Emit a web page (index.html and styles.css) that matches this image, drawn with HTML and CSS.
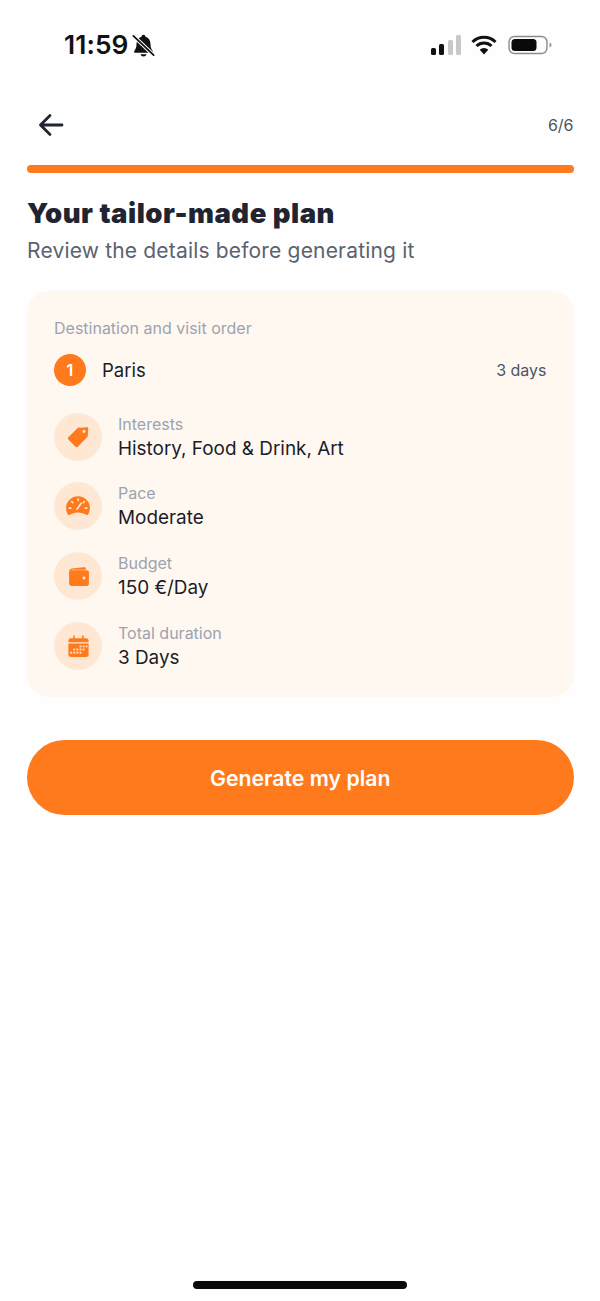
FILE: index.html
```html
<!DOCTYPE html>
<html lang="en">
<head>
<meta charset="utf-8">
<title>Your tailor-made plan</title>
<link rel="stylesheet" href="styles.css">
</head>
<body>
<div class="screen">
  <header class="status">
    <div class="status-left">
      <span class="time">11:59</span>
      <svg class="bell" viewBox="0 0 24 24" width="27" height="27"><path d="M12 2.500c-1 0-1.700.7-1.800 1.700C7.500 5 5.800 7.400 5.800 10.500c0 3.500-.8 4.800-2 6.300-.5.700 0 1.700.9 1.700h14.600c.9 0 1.400-1 .9-1.700-1.200-1.500-2-2.800-2-6.300 0-3.100-1.700-5.500-4.400-6.300-.1-1-.8-1.700-1.800-1.700zM9.300 19.800a2.800 2.800 0 0 0 5.400 0z" fill="#111"/><path d="M3 3.500l18 17" stroke="#fff" stroke-width="3.400"/><path d="M3 3.500l18 17" stroke="#111" stroke-width="1.600" stroke-linecap="round"/></svg>
    </div>
    <div class="status-right">
      <svg class="signal" viewBox="0 0 30 20" width="30" height="20"><rect x="0" y="13" width="5" height="7" rx="1.500" fill="#111"/><rect x="8" y="9" width="5" height="11" rx="1.500" fill="#111"/><rect x="17" y="5" width="5" height="15" rx="1.500" fill="#c8c8c8"/><rect x="25" y="0" width="5" height="20" rx="1.500" fill="#c8c8c8"/></svg>
      <svg class="wifi" viewBox="0 0 26 20" width="26" height="20"><path d="M1.500 7a16.500 16.500 0 0 1 23 0M5.500 11a10.800 10.800 0 0 1 15 0" fill="none" stroke="#111" stroke-width="3" stroke-linecap="butt"/><path d="M13 19.500l-4.300-4.700a6 6 0 0 1 8.600 0z" fill="#111"/></svg>
      <svg class="battery" viewBox="0 0 44 20" width="44" height="20"><rect x="1" y="1.500" width="38" height="17" rx="5.500" fill="none" stroke="#8c8c8c" stroke-width="1.400"/><rect x="3.500" y="4" width="25" height="12" rx="3.500" fill="#0a0a0a"/><path d="M41.500 7.500c1.500.5 2 1.500 2 2.500s-.5 2-2 2.500z" fill="#999"/></svg>
    </div>
  </header>

  <main class="content">
    <nav class="topbar">
      <svg class="back" viewBox="0 0 26 24" width="26" height="24"><path d="M24 12H2.500M12 2.500L2.500 12l9.500 9.500" fill="none" stroke="#1f2430" stroke-width="2.800" stroke-linecap="round" stroke-linejoin="round"/></svg>
      <span class="step">6/6</span>
    </nav>
    <div class="progress"></div>
    <h1 class="title">Your tailor-made plan</h1>
    <p class="subtitle">Review the details before generating it</p>

    <section class="card">
      <div class="card-label">Destination and visit order</div>
      <div class="dest">
        <span class="badge">1</span>
        <span class="city">Paris</span>
        <span class="days">3 days</span>
      </div>
      <div class="rows">
        <div class="row">
          <span class="icon-wrap"><svg viewBox="0 0 24 24" width="26" height="26"><path d="M13.500 3.500l7-.5c.6 0 1 .4 1 1l-.5 7c0 .5-.2.900-.6 1.300l-8.600 8.600c-.6.600-1.500.600-2.100 0l-6.600-6.600c-.6-.6-.6-1.500 0-2.100l8.600-8.600c.4-.4.900-.6 1.300-.6zM17.500 5.200a1.500 1.500 0 1 0 0 3 1.500 1.500 0 0 0 0-3z" fill="#ff7a1c" fill-rule="evenodd"/></svg></span>
          <div class="info"><div class="info-label">Interests</div><div class="info-value">History, Food &amp; Drink, Art</div></div>
        </div>
        <div class="row">
          <span class="icon-wrap"><svg viewBox="0 0 24 24" width="26" height="26"><path d="M12 3a11 11 0 0 0-11 11c0 2.300.7 4.300 1.900 6 .3.400.7.500 1.100.3C6.400 19 9 18 12 18s5.600 1 8 2.300c.4.200.8.100 1.100-.3 1.200-1.700 1.900-3.700 1.900-6A11 11 0 0 0 12 3z" fill="#ff7a1c"/><path d="M12 5.500v1.500M6.200 8l1 1M3.900 14h1.500M18.600 14h1.500M17.800 8l-1 1M11 15l4-5.500" stroke="#ffe6d2" stroke-width="1.500" stroke-linecap="round" fill="none"/></svg></span>
          <div class="info"><div class="info-label">Pace</div><div class="info-value">Moderate</div></div>
        </div>
        <div class="row">
          <span class="icon-wrap"><svg viewBox="0 0 24 24" width="25" height="25"><path d="M3 7.500C3 5.500 4 4.500 5.500 4.200L17 3c1.200-.1 2 .6 2 1.800V5.400H5.500" fill="#ff7a1c"/><path d="M3 8c0-1.100.9-2 2-2h15c1.100 0 2 .9 2 2v11c0 1.100-.9 2-2 2H5c-1.100 0-2-.9-2-2z" fill="#ff7a1c"/><circle cx="17.300" cy="13.500" r="1.400" fill="#ffe6d2"/></svg></span>
          <div class="info"><div class="info-label">Budget</div><div class="info-value">150 €/Day</div></div>
        </div>
        <div class="row">
          <span class="icon-wrap"><svg viewBox="0 0 24 24" width="25" height="25"><path d="M7 1.500h1.500V4h7V1.500H17V4h2.500c1.200 0 2.200 1 2.200 2.200V8H2.300V6.200C2.300 5 3.300 4 4.500 4H7z" fill="#ff7a1c"/><path d="M2.300 9.200h19.400v10.600c0 1.200-1 2.200-2.200 2.200h-15c-1.200 0-2.200-1-2.200-2.200z" fill="#ff7a1c"/><g fill="#ffe6d2"><rect x="13" y="11" width="1.800" height="1.800"/><rect x="16" y="11" width="1.800" height="1.800"/><rect x="19" y="11" width="1.500" height="1.800"/><rect x="7" y="14" width="1.800" height="1.800"/><rect x="10" y="14" width="1.800" height="1.800"/><rect x="13" y="14" width="1.800" height="1.800"/><rect x="16" y="14" width="1.800" height="1.800"/><rect x="4" y="17" width="1.800" height="1.800"/><rect x="7" y="17" width="1.800" height="1.800"/><rect x="10" y="17" width="1.800" height="1.800"/><rect x="13" y="17" width="1.800" height="1.800"/></g></svg></span>
          <div class="info"><div class="info-label">Total duration</div><div class="info-value">3 Days</div></div>
        </div>
      </div>
    </section>

    <button class="cta" type="button">Generate my plan</button>
  </main>

  <div class="home-indicator"></div>
</div>
</body>
</html>
```

FILE: styles.css
```css
* { box-sizing: border-box; }
html, body { margin: 0; padding: 0; background: #fff; }
body { font-family: Inter, "Liberation Sans", sans-serif; color: #1a1d29; }
.screen { width: 600px; height: 1301px; display: flex; flex-direction: column; overflow: hidden; background: #fefefe; }
.status { height: 90px; flex: none; display: flex; justify-content: space-between; align-items: flex-start; padding: 30px 48px 0 64px; }
.status-left { display: flex; align-items: center; gap: 2px; height: 30px; }
.time { font-family: Inter, sans-serif; font-size: 26.300px; font-weight: 600; line-height: 30px; color: #111; letter-spacing: .1px; }
.status-right { display: flex; align-items: center; height: 30px; }
.signal { margin-right: 10px; }
.wifi { margin-right: 11px; }
.content { flex: 1; display: flex; flex-direction: column; padding: 0 26.500px 0 27px; }
.topbar { display: flex; justify-content: space-between; align-items: center; height: 50px; margin-top: 10px; padding-left: 11px; }
.step { font-size: 16px; color: #4b5563; }
.progress { height: 8px; border-radius: 4px; background: #ff7a1c; margin-top: 15px; }
.title { margin: 22px 0 0; font-family: Inter, sans-serif; font-size: 27.500px; font-weight: 900; line-height: 36px; color: #1f2430; letter-spacing: .5px; }
.subtitle { margin: 5px 0 0; font-size: 21px; line-height: 30px; color: #5b6270; letter-spacing: .18px; }
.card { margin-top: 25px; height: 405.500px; background: #fff8f1; border-radius: 22px; padding: 27px 27px 0; }
.card-label { font-size: 16px; line-height: 20px; color: #9ca3af; }
.dest { display: flex; align-items: center; margin-top: 16px; height: 32px; }
.badge { width: 32px; height: 32px; border-radius: 50%; background: #ff7a1c; color: #fff; font-size: 16px; font-weight: 600; display: flex; align-items: center; justify-content: center; }
.city { margin-left: 16px; font-size: 18.500px; color: #1a1d29; flex: 1; }
.days { font-size: 16px; color: #4b5563; }
.rows { display: flex; flex-direction: column; gap: 20.900px; margin-top: 26px; }
.row { display: flex; align-items: center; gap: 16px; height: 49px; }
.icon-wrap { width: 48px; height: 48px; border-radius: 50%; background: #ffe8d3; display: flex; align-items: center; justify-content: center; flex: none; }
.info { padding-top: 3px; }
.info-label { font-size: 16px; line-height: 20px; color: #9ca3af; }
.info-value { font-size: 18.900px; line-height: 28px; margin-top: 1px; color: #1a1d29; }
.cta { margin-top: 43.500px; height: 75px; border: 0; border-radius: 38px; background: #ff7a1c; color: #fff; font-family: Inter, sans-serif; font-size: 21.250px; font-weight: 600; }
.home-indicator { position: absolute; left: 193px; top: 1281px; width: 214px; height: 8px; border-radius: 4px; background: #0a0a0a; }
```
